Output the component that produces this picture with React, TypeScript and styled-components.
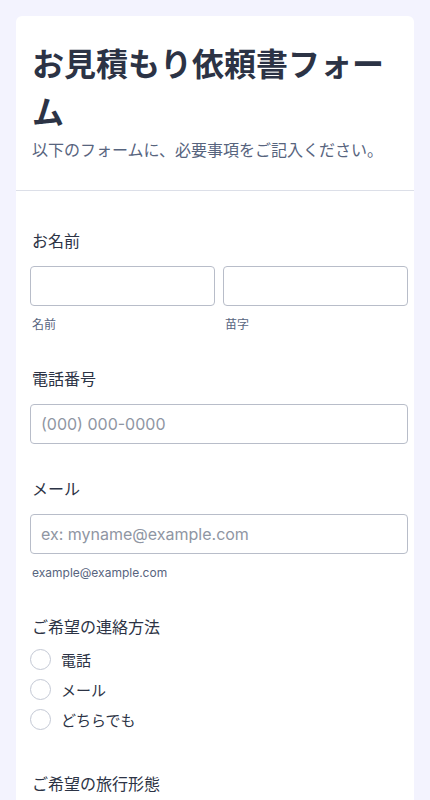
import React, { FC } from 'react'
import styled, { createGlobalStyle } from 'styled-components'

const GlobalStyle = createGlobalStyle`
  html, body {
    margin: 0;
    padding: 0;
    background: #f3f3fe;
  }
  body {
    font-family: Inter, "Noto Sans CJK JP", "Noto Sans", sans-serif;
    color: #2c3345;
    -webkit-font-smoothing: antialiased;
  }
  * {
    box-sizing: border-box;
  }
`

const Page = styled.div`
  padding: 16px 16px 0 16px;
`

const Card = styled.form`
  background: #ffffff;
  border-radius: 6px 6px 0 0;
  padding-bottom: 40px;
`

const Header = styled.header`
  padding: 25px 16px 28px 16px;
  border-bottom: 1px solid #dcdfe8;
`

const Title = styled.h1`
  margin: 0;
  font-size: 32px;
  line-height: 48px;
  font-weight: 700;
  color: #2c3345;
`

const Subtitle = styled.p`
  margin: 1px 0 0 0;
  font-size: 16px;
  line-height: 24px;
  color: #57647e;
`

const Fields = styled.div`
  display: flex;
  flex-direction: column;
  gap: 33px;
  padding: 38px 6px 0 14px;
`

const Field = styled.div`
  display: flex;
  flex-direction: column;
`

const Label = styled.label`
  display: block;
  padding-left: 2px;
  font-size: 16px;
  line-height: 24px;
  color: #2c3345;
  margin-bottom: 13px;
`

const Row = styled.div`
  display: grid;
  grid-template-columns: 1fr 1fr;
  gap: 8px;
`

const Input = styled.input`
  width: 100%;
  height: 40px;
  border: 1px solid #b8bdc9;
  border-radius: 4px;
  padding: 0 10px;
  font-family: Inter, "Noto Sans CJK JP", sans-serif;
  font-size: 16px;
  color: #2c3345;
  background: #ffffff;
  outline: none;

  &::placeholder {
    color: #8f96a3;
  }
`

const SubLabel = styled.span`
  display: block;
  margin-top: 10px;
  padding-left: 2px;
  font-size: 12px;
  line-height: 18px;
  color: #57647e;
`

const Options = styled.div`
  display: flex;
  flex-direction: column;
  margin: -8px 0 5px 0;
`

const Option = styled.label`
  display: flex;
  align-items: center;
  gap: 10px;
  height: 30px;
  font-size: 15px;
  color: #2c3345;
`

const RadioCircle = styled.span`
  width: 21px;
  height: 21px;
  border-radius: 50%;
  border: 1px solid #c3c8d4;
  background: #ffffff;
  flex-shrink: 0;
`

interface RadioGroupProps {
  options: string[]
}

const RadioGroup: FC<RadioGroupProps> = ({ options }) => (
  <Options>
    {options.map(opt => (
      <Option key={opt}>
        <RadioCircle />
        {opt}
      </Option>
    ))}
  </Options>
)

const App: FC = () => (
  <>
    <GlobalStyle />
    <Page>
      <Card>
        <Header>
          <Title>お見積もり依頼書フォーム</Title>
          <Subtitle>以下のフォームに、必要事項をご記入ください。</Subtitle>
        </Header>
        <Fields>
          <Field>
            <Label>お名前</Label>
            <Row>
              <div>
                <Input type="text" />
                <SubLabel>名前</SubLabel>
              </div>
              <div>
                <Input type="text" />
                <SubLabel>苗字</SubLabel>
              </div>
            </Row>
          </Field>
          <Field>
            <Label>電話番号</Label>
            <Input type="tel" placeholder="(000) 000-0000" />
          </Field>
          <Field>
            <Label>メール</Label>
            <Input type="email" placeholder="ex: myname@example.com" />
            <SubLabel>example@example.com</SubLabel>
          </Field>
          <Field>
            <Label>ご希望の連絡方法</Label>
            <RadioGroup options={['電話', 'メール', 'どちらでも']} />
          </Field>
          <Field>
            <Label>ご希望の旅行形態</Label>
          </Field>
        </Fields>
      </Card>
    </Page>
  </>
)

export default App
